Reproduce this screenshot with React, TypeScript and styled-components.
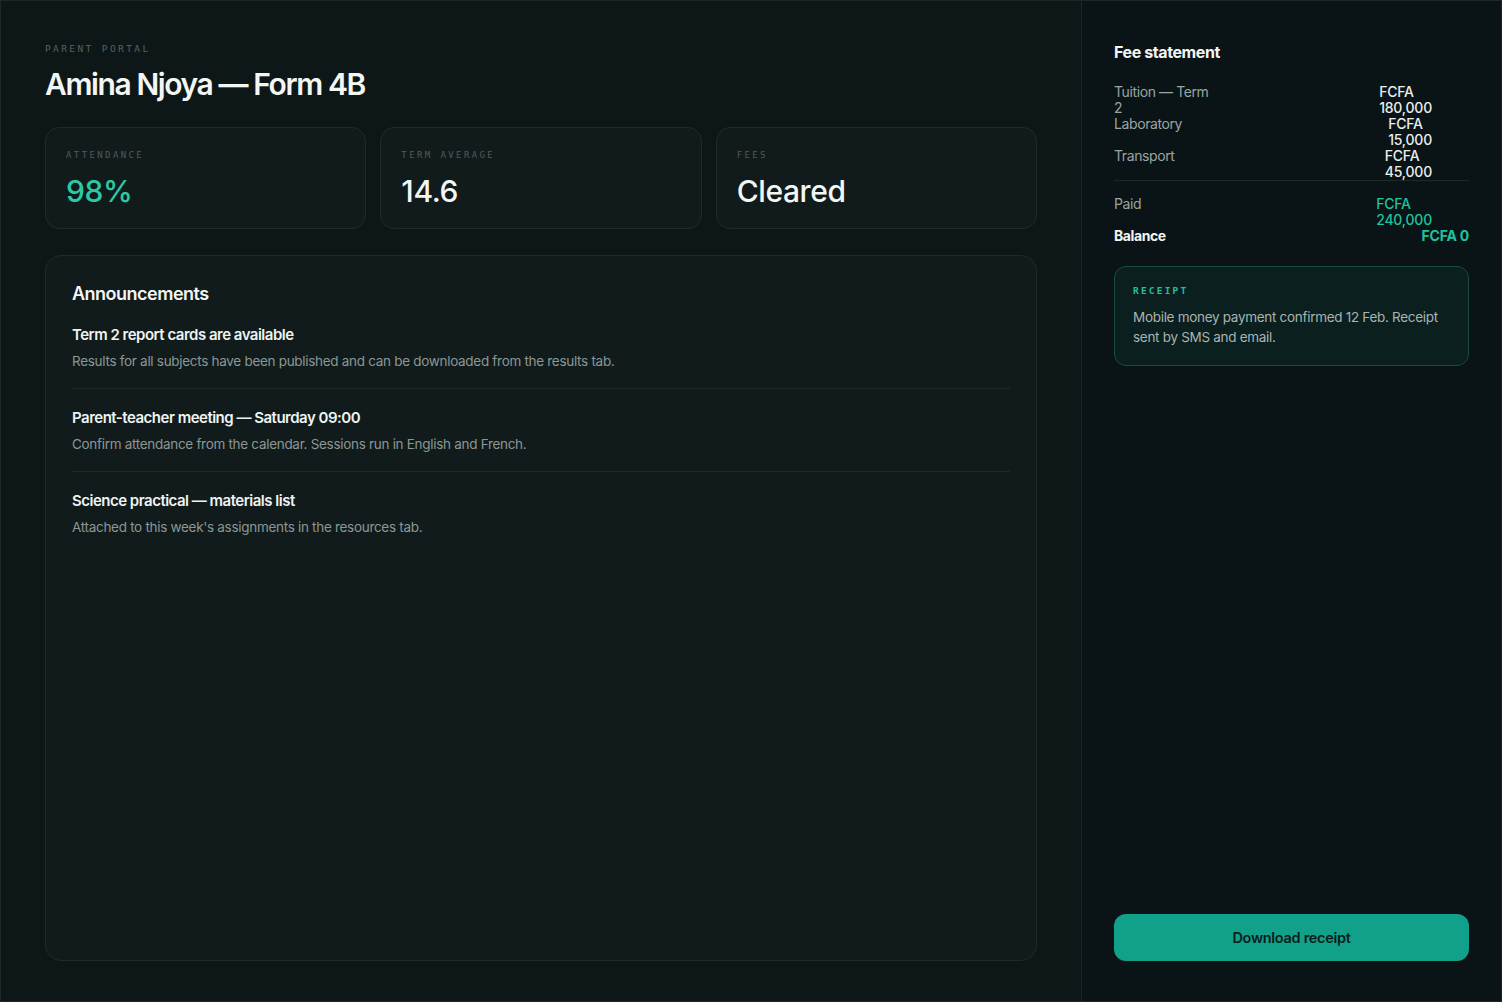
import styled, { createGlobalStyle } from 'styled-components'

const GlobalStyle = createGlobalStyle`
  html, body {
    margin: 0;
    padding: 0;
    background: #0b1315;
  }

  body {
    font-family: Inter, 'Noto Sans', sans-serif;
    color: #e8eeec;
    -webkit-font-smoothing: antialiased;
  }

  * {
    box-sizing: border-box;
  }
`

const stats = [
  { label: 'Attendance', value: '98%', accent: true },
  { label: 'Term average', value: '14.6', accent: false },
  { label: 'Fees', value: 'Cleared', accent: false },
]

const announcements = [
  {
    title: 'Term 2 report cards are available',
    body: 'Results for all subjects have been published and can be downloaded from the results tab.',
  },
  {
    title: 'Parent-teacher meeting — Saturday 09:00',
    body: 'Confirm attendance from the calendar. Sessions run in English and French.',
  },
  {
    title: 'Science practical — materials list',
    body: "Attached to this week's assignments in the resources tab.",
  },
]

const charges = [
  { label: 'Tuition — Term 2', amount: 'FCFA 180,000' },
  { label: 'Laboratory', amount: 'FCFA 15,000' },
  { label: 'Transport', amount: 'FCFA 45,000' },
]

// Parent dashboard: student overview on the left, fee statement on the right.
export default function App() {
  return (
    <>
      <GlobalStyle />
      <Frame>
        <Main>
          <Eyebrow>Parent portal</Eyebrow>
          <Title>Amina Njoya — Form 4B</Title>

          <StatGrid>
            {stats.map((stat) => (
              <StatCard key={stat.label}>
                <StatLabel>{stat.label}</StatLabel>
                <StatValue $accent={stat.accent}>{stat.value}</StatValue>
              </StatCard>
            ))}
          </StatGrid>

          <Panel>
            <PanelTitle>Announcements</PanelTitle>
            <NoticeList>
              {announcements.map((notice) => (
                <Notice key={notice.title}>
                  <NoticeTitle>{notice.title}</NoticeTitle>
                  <NoticeBody>{notice.body}</NoticeBody>
                </Notice>
              ))}
            </NoticeList>
          </Panel>
        </Main>

        <Aside>
          <AsideTitle>Fee statement</AsideTitle>

          <Ledger>
            {charges.map((charge) => (
              <LedgerRow key={charge.label}>
                <LedgerLabel>{charge.label}</LedgerLabel>
                <Amount>{charge.amount}</Amount>
              </LedgerRow>
            ))}
          </Ledger>

          <Totals>
            <LedgerRow>
              <LedgerLabel>Paid</LedgerLabel>
              <Amount $tone="paid">FCFA 240,000</Amount>
            </LedgerRow>
            <LedgerRow>
              <BalanceLabel>Balance</BalanceLabel>
              <Amount $tone="balance">FCFA 0</Amount>
            </LedgerRow>
          </Totals>

          <ReceiptCard>
            <ReceiptTag>Receipt</ReceiptTag>
            <ReceiptText>
              Mobile money payment confirmed 12 Feb. Receipt sent by SMS and email.
            </ReceiptText>
          </ReceiptCard>

          <DownloadButton type="button">Download receipt</DownloadButton>
        </Aside>
      </Frame>
    </>
  )
}

const Frame = styled.div`
  display: grid;
  grid-template-columns: 1081px 1fr;
  width: 1502px;
  height: 1002px;
  border: 1px solid #1b2826;
  overflow: hidden;
`

const Main = styled.main`
  display: flex;
  flex-direction: column;
  padding: 42px 44px 40px;
  background: #0e1718;
  border-right: 1px solid #1a2624;
  min-height: 0;
`

const Eyebrow = styled.div`
  font-family: 'DejaVu Sans Mono', 'Liberation Mono', monospace;
  font-size: 9.5px;
  letter-spacing: 2.4px;
  text-transform: uppercase;
  color: #56625f;
  line-height: 12px;
`

const Title = styled.h1`
  margin: 11px 0 25px;
  font-size: 30px;
  font-weight: 600;
  letter-spacing: -1.4px;
  line-height: 36px;
  color: #f2f6f4;
`

const StatGrid = styled.div`
  display: grid;
  grid-template-columns: repeat(3, minmax(0, 1fr));
  gap: 14px;
`

const StatCard = styled.div`
  height: 102px;
  padding: 21px 20px;
  border: 1px solid #1f2b2a;
  border-radius: 14px;
  background: #111b1c;
`

const StatLabel = styled.div`
  font-family: 'DejaVu Sans Mono', 'Liberation Mono', monospace;
  font-size: 9px;
  letter-spacing: 2.4px;
  text-transform: uppercase;
  color: #4f5c59;
  line-height: 12px;
`

const StatValue = styled.div<{ $accent: boolean }>`
  margin-top: 12px;
  font-size: 30px;
  font-weight: 500;
  line-height: 36px;
  letter-spacing: -0.4px;
  color: ${({ $accent }) => ($accent ? '#2cc9a4' : '#f2f6f4')};
`

const Panel = styled.section`
  flex: 1;
  margin-top: 26px;
  padding: 26px 26px;
  border: 1px solid #1f2b2a;
  border-radius: 16px;
  background: #111b1c;
`

const PanelTitle = styled.h2`
  margin: 0 0 9px;
  font-size: 18px;
  font-weight: 600;
  letter-spacing: -0.5px;
  line-height: 24px;
  color: #f2f6f4;
`

const NoticeList = styled.div`
  display: flex;
  flex-direction: column;
`

const Notice = styled.div`
  padding: 10px 0 18px;
  border-bottom: 1px solid #1e2a29;

  & + & {
    padding-top: 19px;
  }

  &:last-child {
    border-bottom: none;
  }
`

const NoticeTitle = styled.div`
  font-size: 15px;
  font-weight: 600;
  letter-spacing: -0.5px;
  line-height: 20px;
  color: #eef3f1;
`

const NoticeBody = styled.div`
  margin-top: 7px;
  font-size: 13.5px;
  letter-spacing: -0.3px;
  line-height: 18px;
  color: #8b9794;
`

const Aside = styled.aside`
  display: flex;
  flex-direction: column;
  padding: 41px 32px 40px;
  background: #0a1315;
`

const AsideTitle = styled.h2`
  margin: 0 0 22px;
  font-size: 16px;
  font-weight: 700;
  letter-spacing: -0.4px;
  line-height: 20px;
  color: #f2f6f4;
`

const Ledger = styled.div`
  display: flex;
  flex-direction: column;
  border-bottom: 1px solid #1e2a29;
`

const Totals = styled.div`
  display: flex;
  flex-direction: column;
  padding-top: 15px;
`

const LedgerRow = styled.div`
  display: flex;
  justify-content: space-between;
  align-items: flex-start;
`

const LedgerLabel = styled.span`
  width: 100px;
  font-size: 14px;
  letter-spacing: -0.4px;
  line-height: 16px;
  color: #9aa6a3;
`

const BalanceLabel = styled(LedgerLabel)`
  font-weight: 700;
  color: #f2f6f4;
`

const Amount = styled.span<{ $tone?: 'paid' | 'balance' }>`
  width: ${({ $tone }) => ($tone === 'balance' ? 'auto' : 'min-content')};
  margin-right: ${({ $tone }) => ($tone === 'balance' ? '0' : '37px')};
  font-size: 14px;
  font-weight: ${({ $tone }) => ($tone === 'balance' ? 700 : 500)};
  letter-spacing: -0.2px;
  line-height: 16px;
  text-align: left;
  color: ${({ $tone }) => ($tone ? '#1fc39e' : '#e9efed')};
`

const ReceiptCard = styled.div`
  margin-top: 22px;
  padding: 18px 18px 18px;
  border: 1px solid #1a4b40;
  border-radius: 12px;
  background: #0b1f1e;
`

const ReceiptTag = styled.div`
  font-family: 'DejaVu Sans Mono', 'Liberation Mono', monospace;
  font-size: 9.5px;
  font-weight: 700;
  letter-spacing: 2.2px;
  text-transform: uppercase;
  color: #22bf9a;
  line-height: 12px;
`

const ReceiptText = styled.p`
  margin: 10px 0 0;
  font-size: 13.5px;
  letter-spacing: -0.3px;
  line-height: 20px;
  color: #a9b4b1;
`

const DownloadButton = styled.button`
  margin-top: auto;
  height: 47px;
  border: none;
  border-radius: 12px;
  background: #11a18b;
  font-family: Inter, 'Noto Sans', sans-serif;
  font-size: 14.5px;
  font-weight: 600;
  letter-spacing: -0.3px;
  color: #0a1d19;
  cursor: pointer;
`
